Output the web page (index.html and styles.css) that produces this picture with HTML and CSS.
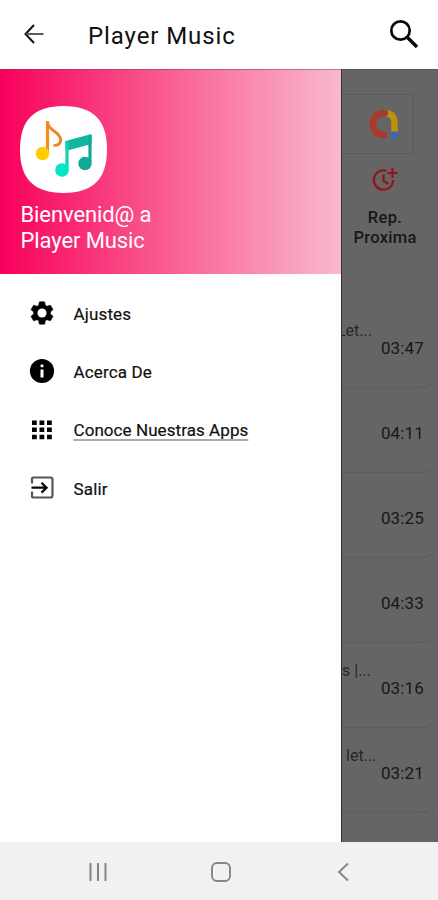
FILE: index.html
```html
<!DOCTYPE html>
<html lang="es">
<head>
<meta charset="utf-8">
<title>Player Music</title>
<link rel="stylesheet" href="styles.css">
</head>
<body>
<header class="topbar">
  <svg class="back" width="20" height="20" viewBox="0 0 20 20"><path d="M10 1 1.500 10l8.500 9" fill="none" stroke="#111" stroke-width="2"/><path d="M2 10h17.500" stroke="#555" stroke-width="1.900"/></svg>
  <h1 class="title">Player Music</h1>
  <svg class="search" width="30" height="30" viewBox="0 0 30 30" fill="none" stroke="#080808"><circle cx="11.500" cy="11.500" r="9.200" stroke-width="2.700"/><path d="m18.500 18.500 9.500 9.500" stroke-width="3.300"/></svg>
</header>
<main class="main">
  <aside class="drawer">
    <section class="welcome">
      <svg class="logo" width="87" height="87" viewBox="0 0 87 87">
        <path d="M43.500 0C73 0 87 14 87 43.500S73 87 43.500 87 0 73 0 43.500 14 0 43.500 0Z" fill="#fff"/>
        <path d="M27.500 47V15" stroke="#f68b1f" stroke-width="3.200"/><path d="M27.500 17.500q1.500 4 6.500 7.500c6 4 8.500 9 5.500 12.500q-2 2.300-6 1.800" fill="none" stroke="#ee8423" stroke-width="2.800"/>
        <circle cx="22.500" cy="47.500" r="6.800" fill="#ffcd00"/>
        <path d="M45.500 35 71.500 28v10l-26 7Z" fill="#12b7a0"/>
        <path d="M47 35v29" stroke="#16cdb5" stroke-width="3.200"/>
        <path d="M70 29v27" stroke="#13a795" stroke-width="3.200"/>
        <circle cx="42" cy="64" r="6.800" fill="#05e6c6"/>
        <circle cx="65" cy="57.500" r="6.700" fill="#13a795"/>
      </svg>
      <p class="greeting">Bienvenid@ a<br>Player Music</p>
    </section>
    <nav class="menu">
      <a class="item"><svg width="28" height="28" viewBox="0 0 24 24"><path stroke="#000" stroke-width=".5" d="M19.140 12.940c.04-.3.060-.61.060-.94 0-.32-.02-.64-.07-.94l2.030-1.580a.49.49 0 0 0 .12-.61l-1.920-3.320a.49.49 0 0 0-.59-.22l-2.390.96c-.5-.38-1.030-.7-1.620-.94l-.36-2.540a.48.48 0 0 0-.48-.41h-3.840c-.24 0-.43.170-.47.410l-.36 2.540c-.59.240-1.130.570-1.620.940l-2.390-.96c-.22-.08-.47 0-.59.220L2.740 8.870c-.12.210-.08.470.12.610l2.030 1.580c-.05.300-.09.630-.09.940s.02.640.07.940l-2.030 1.580a.49.49 0 0 0-.12.610l1.920 3.320c.12.220.37.290.59.220l2.390-.96c.5.380 1.030.700 1.620.940l.36 2.540c.05.240.24.410.48.410h3.840c.24 0 .44-.17.470-.41l.36-2.540c.59-.24 1.130-.56 1.620-.94l2.390.96c.22.080.47 0 .59-.22l1.920-3.320c.12-.22.070-.47-.12-.61l-2.010-1.580z"/><circle cx="12" cy="12" r="3.900" fill="#fff"/></svg><span>Ajustes</span></a>
      <a class="item"><svg width="28" height="28" viewBox="0 0 28 28"><circle cx="14" cy="14" r="12.100"/><path d="M14 12.500v8" stroke="#fff" stroke-width="3"/><circle cx="14" cy="8.800" r="1.600" fill="#fff"/></svg><span>Acerca De</span></a>
      <a class="item"><svg width="28" height="28" viewBox="0 0 28 28"><path d="M4 4.500h4.800v4.500h-4.800zM11.500 4.500h4.800v4.500h-4.800zM19 4.500h4.800v4.500h-4.800zM4 11.500h4.800v4.500h-4.800zM11.500 11.500h4.800v4.500h-4.800zM19 11.500h4.800v4.500h-4.800zM4 18.800h4.800v4.500h-4.800zM11.500 18.800h4.800v4.500h-4.800zM19 18.800h4.800v4.500h-4.800z"/></svg><span class="linked">Conoce Nuestras Apps</span></a>
      <a class="item"><svg width="28" height="28" viewBox="0 0 28 28" fill="none"><path d="M4 9.500V5q0-1.500 1.500-1.500h17Q24.500 3.500 24.500 5.500v16q0 2-2 2h-17Q4 23.500 4 22v-4.500" stroke="#555" stroke-width="2.200"/><path d="M3.500 13.700h14M13.500 8.800l5 4.900-5 4.900" stroke="#080808" stroke-width="2.300"/></svg><span>Salir</span></a>
    </nav>
  </aside>
  <section class="content">
    <div class="ad">
      <svg width="32" height="32" viewBox="0 0 32 32" fill="none" stroke-width="6.500"><path d="M16.500 5C23 4.500 26.500 9 26.500 15v9" stroke="#bd900e"/><path d="M17 5C10 4.500 4.800 9.500 4.800 16S10 27.500 16 27" stroke="#a83a2d" stroke-linecap="round"/><circle cx="26.500" cy="27" r="3.700" fill="#3a69b0"/></svg>
    </div>
    <div class="action">
      <svg width="28" height="26" viewBox="0 0 28 26" fill="none" stroke="#98101a" stroke-width="2.200"><path d="M15.500 3.800A9.700 9.700 0 1 0 22.200 13M12.500 7.500V14l5 3M21.500 1v10M16.500 6h10"/></svg>
      <p class="label">Rep.<br>Proxima</p>
    </div>
    <ul class="songs">
      <li class="song"><span class="name">Let...</span><time>03:47</time></li>
      <li class="song"><time>04:11</time></li>
      <li class="song"><time>03:25</time></li>
      <li class="song"><time>04:33</time></li>
      <li class="song"><span class="name s">s |...</span><time>03:16</time></li>
      <li class="song"><span class="name l">let...</span><time>03:21</time></li>
    </ul>
  </section>
</main>
<footer class="sysbar">
  <svg width="20" height="20" viewBox="0 0 20 20" stroke="#858585" stroke-width="2"><path d="M2.500 1v18M10 1v18M17.500 1v18"/></svg>
  <svg width="20" height="20" viewBox="0 0 20 20" fill="none" stroke="#858585" stroke-width="1.900"><rect x="1" y="1" width="18" height="18" rx="5"/></svg>
  <svg width="12" height="20" viewBox="0 0 12 20" fill="none" stroke="#858585" stroke-width="1.900"><path d="m11 1.500-9 8.500 9 8.500"/></svg>
</footer>
</body>
</html>
```
FILE: styles.css
```css
* { box-sizing: border-box; }
body { margin: 0; width: 438px; height: 900px; display: flex; flex-direction: column; background: #fff; font-family: Roboto, sans-serif; color: #111; overflow: hidden; }
h1, p, ul { margin: 0; padding: 0; list-style: none; }
svg { display: block; flex: none; }
.topbar { height: 69px; flex: none; display: flex; align-items: center; padding: 0 19px 0 24px; }
.back { margin-bottom: 1px; }
.title { margin-left: 44px; padding-top: 2px; font-size: 24px; font-weight: 400; letter-spacing: .9px; white-space: nowrap; line-height: 30px; }
.search { margin: 0 0 1px auto; }
.main { height: 773px; display: flex; }
.drawer { width: 341px; flex: none; background: #fff; }
.welcome { height: 205px; padding: 36px 20px 0; background: linear-gradient(90deg, #f8005b, #f9729f 60%, #f9b8d0); border-top: 1px solid rgba(120, 60, 90, .5); }
.greeting { margin-top: 9px; color: #fff; font-size: 22px; line-height: 26px; letter-spacing: -.1px; padding-left: .5px; }
.menu { padding-top: 10px; }
.item { height: 58.300px; display: flex; align-items: center; padding-left: 28px; gap: 17.500px; font-size: 17px; font-weight: 400; letter-spacing: .15px; }
.item span { padding-top: 1px; -webkit-text-stroke: .2px #111; }
.item .linked { letter-spacing: .07px; text-decoration: underline; text-decoration-color: #aaa; text-decoration-thickness: 2px; text-underline-offset: 3px; text-decoration-skip-ink: none; }
.content { width: 97px; background: #656565; border-left: 1px solid #303030; border-top: 1px solid #555; overflow: hidden; color: #171717; }
.ad { width: 72px; height: 60px; margin-top: 24px; border: 1px solid #5b5b5b; border-left: 0; display: flex; align-items: center; padding-left: 26px; }
.action { height: 149px; padding-top: 13px; display: flex; flex-direction: column; align-items: center; width: 86px; }
.label { margin-top: 15px; font-size: 16.500px; line-height: 20px; font-weight: 500; letter-spacing: .3px; text-align: center; }
.songs { width: 96px; }
.song { height: 85px; border-bottom: 1px solid #5c5c5c; border-bottom-right-radius: 16px; font-size: 17px; line-height: 20px; display: grid; grid-template-rows: 17px 20px; padding-top: 18px; }
.song .name { grid-area: 1 / 1; font-size: 16px; margin-left: -5px; color: #282828; white-space: nowrap; }
.song .name.s { margin-left: 0; }
.song .name.l { margin-left: 4px; }
.song time { grid-area: 2 / 1; justify-self: end; padding-right: 14px; letter-spacing: .15px; }
.sysbar { height: 58px; flex: none; background: #f1f1f1; display: flex; align-items: center; padding: 2px 89px 0 88px; }
.sysbar svg:nth-child(2) { margin-left: 103px; }
.sysbar svg:nth-child(3) { margin-left: 106px; }
```
